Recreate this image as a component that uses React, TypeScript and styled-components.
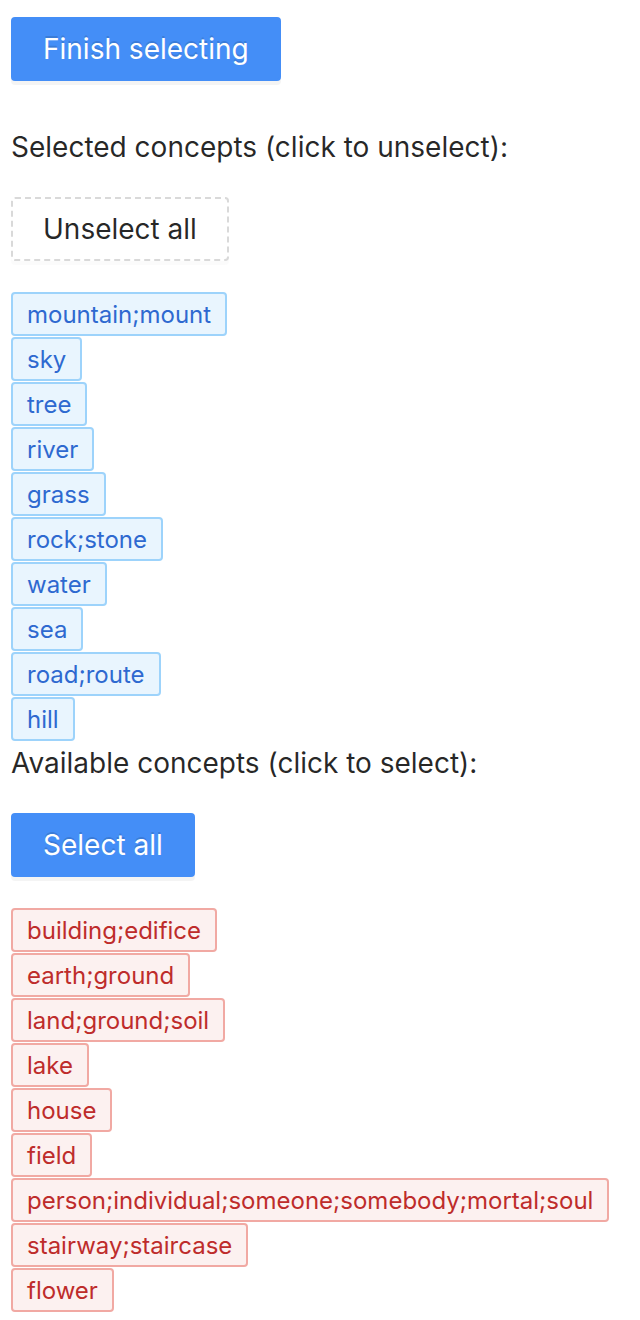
import React, { useState } from "react";
import styled, { createGlobalStyle, css } from "styled-components";

const GlobalStyle = createGlobalStyle`
  body {
    margin: 0;
    background: #fff;
    color: rgba(0, 0, 0, 0.85);
    font-family: Inter, "Liberation Sans", sans-serif;
    font-size: 28px;
    line-height: 44px;
  }
`;

const Page = styled.main`
  padding: 17px 11px 8px;
`;

const Button = styled.button<{ $variant?: "primary" | "dashed" }>`
  display: block;
  box-sizing: border-box;
  height: 64px;
  padding: 0 30px;
  border-radius: 4px;
  font: inherit;
  cursor: pointer;
  ${({ $variant = "primary" }) =>
    $variant === "primary"
      ? css`
          border: 2px solid #448ef7;
          background: #448ef7;
          color: #fff;
          text-shadow: 0 -2px 0 rgba(0, 0, 0, 0.12);
          box-shadow: 0 4px 0 rgba(0, 0, 0, 0.045);
        `
      : css`
          border: 2px dashed #d9d9d9;
          background: #fff;
          color: rgba(0, 0, 0, 0.85);
          box-shadow: 0 4px 0 rgba(0, 0, 0, 0.016);
        `}
`;

const Section = styled.section<{ $first?: boolean }>`
  margin-top: ${({ $first }) => ($first ? "44px" : "0")};
`;

const Heading = styled.p`
  margin: 0 0 28px;
`;

const TagList = styled.ul`
  display: flex;
  flex-direction: column;
  align-items: flex-start;
  gap: 1px;
  margin: 31px 0 0;
  padding: 0;
  list-style: none;
`;

const Tag = styled.button<{ $tone: "blue" | "red" }>`
  display: block;
  box-sizing: border-box;
  height: 44px;
  padding: 2px 14px 0;
  border: 2px solid ${({ $tone }) => ($tone === "blue" ? "#9dd3fb" : "#f1a9a3")};
  border-radius: 4px;
  background: ${({ $tone }) => ($tone === "blue" ? "#e9f5fe" : "#fcf1f0")};
  color: ${({ $tone }) => ($tone === "blue" ? "#2e69d0" : "#be2c2b")};
  font: inherit;
  font-size: 24px;
  line-height: 38px;
  white-space: nowrap;
  cursor: pointer;
`;

const initialSelected = [
  "mountain;mount", "sky", "tree", "river", "grass",
  "rock;stone", "water", "sea", "road;route", "hill",
];

const initialAvailable = [
  "building;edifice", "earth;ground", "land;ground;soil", "lake", "house",
  "field", "person;individual;someone;somebody;mortal;soul",
  "stairway;staircase", "flower",
];

interface TagsProps {
  items: string[];
  tone: "blue" | "red";
  onPick: (item: string) => void;
}

function Tags({ items, tone, onPick }: TagsProps) {
  return (
    <TagList>
      {items.map((item) => (
        <li key={item}>
          <Tag type="button" $tone={tone} onClick={() => onPick(item)}>{item}</Tag>
        </li>
      ))}
    </TagList>
  );
}

export default function App() {
  const [selected, setSelected] = useState(initialSelected);
  const [available, setAvailable] = useState(initialAvailable);

  const unselect = (item: string) => {
    setSelected(selected.filter((s) => s !== item));
    setAvailable([...available, item]);
  };
  const select = (item: string) => {
    setAvailable(available.filter((s) => s !== item));
    setSelected([...selected, item]);
  };
  const unselectAll = () => {
    setAvailable([...available, ...selected]);
    setSelected([]);
  };
  const selectAll = () => {
    setSelected([...selected, ...available]);
    setAvailable([]);
  };

  return (
    <>
      <GlobalStyle />
      <Page>
        <Button type="button">Finish selecting</Button>
        <Section $first>
          <Heading>Selected concepts (click to unselect):</Heading>
          <Button type="button" $variant="dashed" onClick={unselectAll}>Unselect all</Button>
          <Tags items={selected} tone="blue" onPick={unselect} />
        </Section>
        <Section>
          <Heading>Available concepts (click to select):</Heading>
          <Button type="button" onClick={selectAll}>Select all</Button>
          <Tags items={available} tone="red" onPick={select} />
        </Section>
      </Page>
    </>
  );
}
